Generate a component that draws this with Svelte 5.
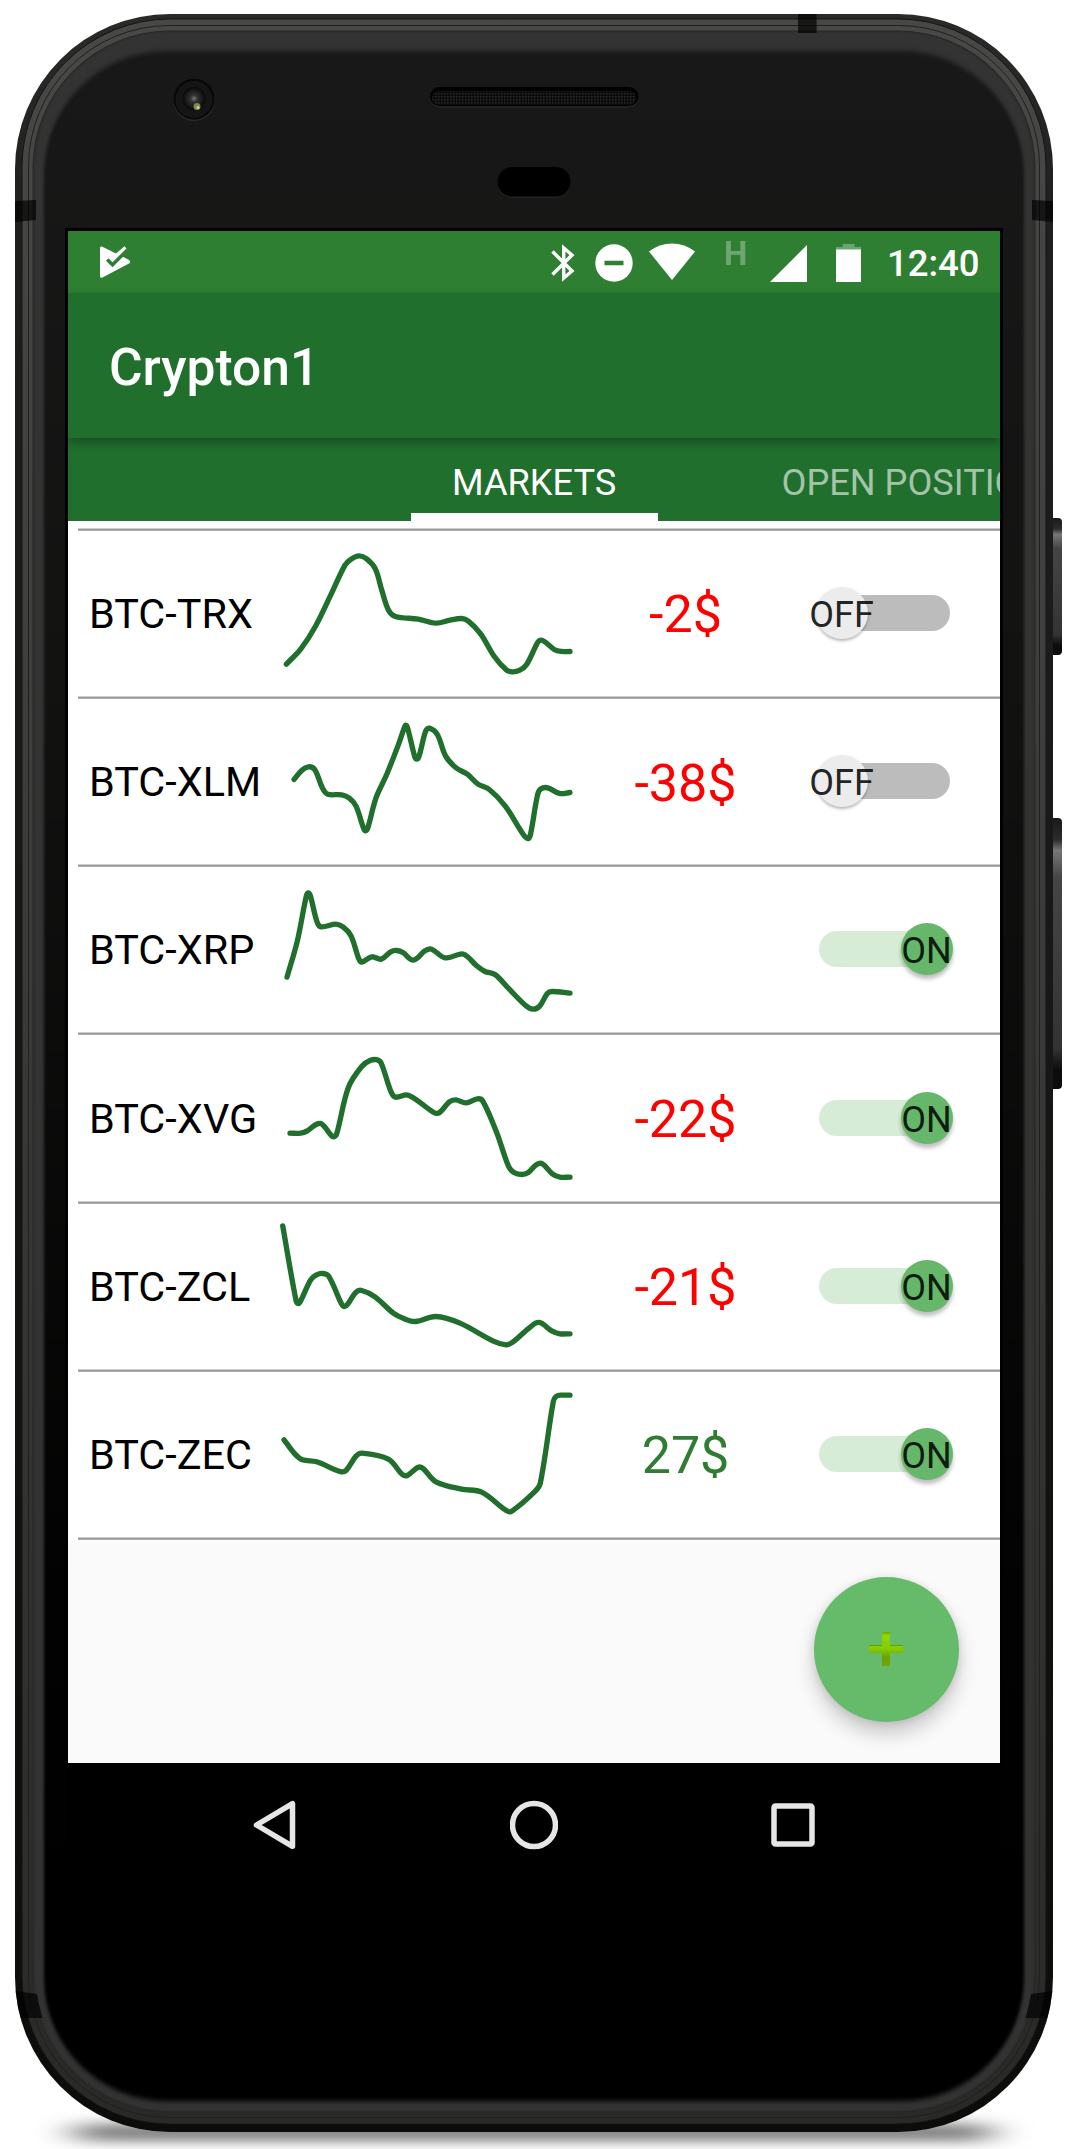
<script>
  // chart points are in thirds of a pixel, measured from the row's divider
  let markets = [
    {
      name: 'BTC-TRX', change: -2, on: false,
      points: '49,404 92,359 136,291 182,197 225,107 243,89 267,79 290,88 316,118 335,181 356,243 376,261 445,269 498,281 540,272 575,267 595,275 632,313 673,381 710,422 727,427 748,423 770,405 802,341 812,332 826,338 854,361 873,366 900,366'
    },
    {
      name: 'BTC-XLM', change: -38, on: false,
      points: '72,246 95,219 115,208 134,216 157,271 173,290 215,292 238,302 258,326 281,393 287,400 294,389 318,301 350,231 385,142 404,88 408,83 413,92 434,177 440,185 447,177 467,101 478,92 502,111 527,176 558,211 592,230 624,260 658,276 706,326 758,408 773,423 781,413 803,291 813,274 833,271 869,288 900,285'
    },
    {
      name: 'BTC-XRP', change: null, on: true,
      points: '51,335 82,226 109,91 115,82 121,91 141,169 153,184 198,176 220,185 243,211 266,279 275,290 305,274 334,281 362,259 380,255 400,262 430,284 465,256 485,251 525,277 575,265 592,273 620,301 645,318 675,327 715,368 768,421 789,431 809,422 832,384 846,378 900,383'
    },
    {
      name: 'BTC-XVG', change: -22, on: true,
      points: '60,299 92,299 112,292 138,273 155,271 182,304 191,310 200,301 235,162 275,99 300,81 322,79 334,90 363,175 376,191 415,185 492,237 509,237 538,205 557,199 588,208 622,196 638,202 680,297 716,399 732,417 755,423 775,417 800,393 817,391 847,421 870,431 900,431'
    },
    {
      name: 'BTC-ZCL', change: -21, on: true,
      points: '38,70 78,294 85,303 92,295 122,232 138,218 158,213 176,221 214,303 223,312 233,305 258,269 275,264 315,283 370,332 403,349 437,357 498,342 570,362 670,416 708,427 727,420 778,376 807,360 845,385 870,394 900,394'
    },
    {
      name: 'BTC-ZEC', change: 27, on: true,
      points: '42,208 75,251 97,268 140,274 210,303 228,300 258,257 276,248 355,266 397,312 412,315 443,291 458,293 498,334 575,356 635,365 710,421 726,422 795,363 811,338 850,93 858,78 873,74 900,74'
    }
  ];

  // smooth curve through all points, handles are a third of each segment
  function curve(points) {
    const p = points.split(' ').map((s) => s.split(',').map(Number));
    const tangents = p.map((_, i) => {
      const a = p[Math.max(i - 1, 0)];
      const b = p[Math.min(i + 1, p.length - 1)];
      const len = Math.hypot(b[0] - a[0], b[1] - a[1]);
      return [(b[0] - a[0]) / len, (b[1] - a[1]) / len];
    });
    let d = `M${p[0]}`;
    for (let i = 1; i < p.length; i++) {
      const [x0, y0] = p[i - 1];
      const [x1, y1] = p[i];
      const h = Math.hypot(x1 - x0, y1 - y0) / 3;
      const [t0, t1] = [tangents[i - 1], tangents[i]];
      d += `C${x0 + t0[0] * h},${y0 + t0[1] * h} ${x1 - t1[0] * h},${y1 - t1[1] * h} ${x1},${y1}`;
    }
    return d;
  }
</script>

<div class="device">
  <svg class="shell" viewBox="0 0 1066 2149" aria-hidden="true">
    <defs>
      <linearGradient id="edge" x1="0" y1="0" x2="0" y2="1">
        <stop offset="0" stop-color="#2a2a29" />
        <stop offset=".1" stop-color="#1f1f1f" />
        <stop offset="1" stop-color="#0c0c0b" />
      </linearGradient>
      <linearGradient id="metal" x1="0" y1="0" x2="0" y2="1">
        <stop offset="0" stop-color="#484846" />
        <stop offset="1" stop-color="#292927" />
      </linearGradient>
      <linearGradient id="glass" x1="0" y1="0" x2="0" y2="1">
        <stop offset="0" stop-color="#181818" />
        <stop offset=".3" stop-color="#121211" />
        <stop offset=".75" stop-color="#020202" />
        <stop offset=".9" stop-color="#000" />
      </linearGradient>
      <linearGradient id="key" x1="0" y1="0" x2="0" y2="1">
        <stop offset="0" stop-color="#1a1a1a" />
        <stop offset=".08" stop-color="#2c2c2c" />
        <stop offset=".12" stop-color="#777" />
        <stop offset=".22" stop-color="#454545" />
        <stop offset=".85" stop-color="#333" />
        <stop offset=".93" stop-color="#0c0c0c" />
      </linearGradient>
      <radialGradient id="lens">
        <stop offset="0" stop-color="#777" />
        <stop offset=".3" stop-color="#333" />
        <stop offset="1" stop-color="#080808" />
      </radialGradient>
      <pattern id="mesh" width="3" height="3" patternUnits="userSpaceOnUse">
        <rect width="3" height="3" fill="#0b0b0b" />
        <rect width="1.5" height="1.5" fill="#2a2a2a" />
      </pattern>
      <filter id="soft" color-interpolation-filters="sRGB"><feGaussianBlur stdDeviation="1.5 2.5" /></filter>
      <filter id="floor" x="-10%" y="-200%" width="120%" height="500%" color-interpolation-filters="sRGB">
        <feGaussianBlur stdDeviation="20 7" />
      </filter>
      <clipPath id="body"><rect x="15" y="14" width="1038" height="2118" rx="155" /></clipPath>
      <clipPath id="inside"><rect x="36" y="33" width="996" height="2077" rx="134" /></clipPath>
    </defs>

    <rect x="75" y="2125" width="916" height="15" rx="7" fill="#666" filter="url(#floor)" />
    <rect x="1046" y="518" width="16" height="137" rx="4" fill="url(#key)" />
    <rect x="1046" y="818" width="16" height="271" rx="4" fill="url(#key)" />

    <g clip-path="url(#body)">
      <rect x="15" y="14" width="1038" height="2118" fill="url(#edge)" />
      <rect x="22" y="19" width="1024" height="2105" rx="148" fill="url(#metal)" stroke="#151514" />
      <rect x="28.500" y="25.500" width="1011" height="2092" rx="141" fill="url(#metal)" stroke="#20201f" />
      <rect x="33" y="31" width="1002" height="2081" rx="137" fill="#30302f" stroke="#262625" />
      <path d="M798 14h18.600v19h-18.600zM15 201l21-1v20l-21 2zM1053 201l-21-1v20l21 2zM15 1991l22 3 6 24H15zM1053 1991l-22 3-6 24h28z" fill="#000" opacity=".68" />
      <g clip-path="url(#inside)">
        <rect x="36" y="33" width="996" height="2077" fill="#333" />
        <rect x="44" y="51" width="980" height="2050" rx="123" fill="url(#glass)" filter="url(#soft)" />
      </g>
    </g>

    <circle cx="194" cy="100.500" r="20.500" fill="#2b2b2b" />
    <circle cx="194" cy="99" r="20.500" fill="#080808" />
    <circle cx="194" cy="99.500" r="18.500" fill="#151515" />
    <circle cx="194" cy="98.500" r="11.500" fill="url(#lens)" />
    <circle cx="197" cy="106.500" r="3.500" fill="#7d8a4c" />
    <circle cx="198" cy="107.500" r="1.500" fill="#c9d49a" />
    <rect x="430" y="88" width="208.500" height="20" rx="10" fill="#222" />
    <rect x="430" y="87" width="208.500" height="19" rx="9.500" fill="#000" />
    <rect x="432" y="91" width="204" height="14" rx="7" fill="url(#mesh)" />
    <rect x="497.500" y="168" width="73" height="30" rx="15" fill="#222" />
    <rect x="497.500" y="167" width="73" height="29.500" rx="14.750" fill="#000" />
    <rect x="65" y="228" width="938" height="1540" fill="#000" />
  </svg>

  <main class="screen">
    <div class="status-bar">
      <svg class="play" width="32" height="34" viewBox="0 0 32 34">
        <path d="M3 1.500Q1 1 1 3v28q0 2.500 2.500 1.500L30 18.500q2.500-1.500 0-3.500l-6-3.300-10.500 10.600-6.500-6.500 2.500-2.500 4 4L27.500 3.500 25.500 1.300 17 8.500z" fill="#fff" />
      </svg>
      <svg class="bluetooth" width="24" height="38" viewBox="0 0 24 38" fill="none" stroke="#fff" stroke-width="3.400">
        <path d="M1.500 7.500 21 27 12.700 34V4L21 11 1.500 30.500" />
      </svg>
      <svg class="dnd" width="38" height="38" viewBox="0 0 38 38">
        <circle cx="19" cy="19" r="18.700" fill="#fff" />
        <path d="M9.500 19h19" stroke="#2f7f33" stroke-width="4.500" />
      </svg>
      <svg class="wifi" width="46" height="38" viewBox="0 0 46 38">
        <path d="M0 8.500Q10.500.5 23 .5T46 8.500L23 37z" fill="#fff" />
      </svg>
      <span class="network">H</span>
      <svg class="signal" width="37" height="37" viewBox="0 0 37 37">
        <path d="M37 0v37H0z" fill="#fff" />
      </svg>
      <svg class="battery" width="25" height="38" viewBox="0 0 25 38">
        <path d="M6.500 0h12v3H25v3H0V3h6.500z" fill="#fff" opacity=".3" />
        <path d="M0 5.500h25V38H0z" fill="#fff" />
      </svg>
      <span class="clock">12:40</span>
    </div>

    <header class="app-bar">
      <h1>Crypton1</h1>
    </header>

    <nav class="tabs">
      <span class="tab active">MARKETS</span>
      <span class="tab">OPEN POSITIONS</span>
    </nav>

    <div class="content">
      <div class="list">
        {#each markets as market (market.name)}
          <div class="divider"></div>
          <div class="row">
            <span class="name">{market.name}</span>
            <svg class="chart" viewBox="0 4.500 930 496" width="310" height="165.300">
              <path d={curve(market.points)} />
            </svg>
            <span class="change" class:loss={market.change < 0}>
              {#if market.change !== null}{market.change}${/if}
            </span>
            <button class="switch" class:on={market.on} on:click={() => (market.on = !market.on)}>
              <span class="thumb">{market.on ? 'ON' : 'OFF'}</span>
            </button>
          </div>
        {/each}
        <div class="divider"></div>
      </div>

      <button class="fab" aria-label="Add market">
        <svg width="34" height="34" viewBox="0 0 34 34">
          <defs>
            <linearGradient id="plus" x1="0" y1="0" x2="0" y2="1">
              <stop offset="0" stop-color="#6aa80c" />
              <stop offset=".1" stop-color="#8ed800" />
              <stop offset=".5" stop-color="#84cc00" />
              <stop offset=".75" stop-color="#6ba300" />
              <stop offset="1" stop-color="#70a808" />
            </linearGradient>
          </defs>
          <path d="M13 0h8v13h13v8H21v13h-8V21H0v-8h13z" fill="url(#plus)" />
          <path d="M0 13.500h13M21 13.500h13" stroke="#68a00d" />
        </svg>
      </button>
    </div>

    <footer class="nav-bar">
      <svg width="48" height="50" viewBox="0 0 48 50"><path d="M41.500 3.700v42.600L5.500 25z" /></svg>
      <svg width="48" height="50" viewBox="0 0 48 50"><circle cx="24" cy="25" r="21.500" /></svg>
      <svg width="48" height="50" viewBox="0 0 48 50"><rect x="5" y="6" width="38" height="38" rx="1.500" /></svg>
    </footer>
  </main>
</div>

<style>
  :global(body) {
    margin: 0;
    background: #fff;
  }

  .device {
    position: relative;
    width: 1066px;
    height: 2149px;
    overflow: hidden;
    box-sizing: border-box;
    padding: 231px 66px 0 68px;
    font-family: Roboto, sans-serif;
  }

  .shell {
    position: absolute;
    top: 0;
    left: 0;
    width: 1066px;
    height: 2149px;
  }

  .screen {
    position: relative;
    width: 932px;
    height: 1655px;
    overflow: hidden;
    display: flex;
    flex-direction: column;
  }

  .status-bar {
    height: 62px;
    flex: none;
    box-sizing: border-box;
    padding: 1px 22px 0 31px;
    display: flex;
    align-items: center;
    background: #2f7f33;
    color: #fff;
  }

  .play {
    margin-bottom: 1px;
  }

  .bluetooth {
    margin-left: auto;
    margin-right: 20px;
  }

  .dnd {
    margin-right: 16px;
  }

  .wifi {
    margin-right: 29px;
    margin-bottom: 2px;
  }

  .network {
    width: 24px;
    margin-right: 22px;
    margin-bottom: 17px;
    font-size: 33px;
    line-height: 34px;
    font-weight: 700;
    opacity: 0.3;
  }

  .signal {
    margin-right: 29px;
    margin-top: 2px;
  }

  .battery {
    margin-right: 26px;
  }

  .clock {
    width: 91px;
    margin-top: 2px;
    font-size: 36.5px;
    font-weight: 500;
    line-height: 40px;
    white-space: nowrap;
  }

  .app-bar {
    position: relative;
    z-index: 1;
    height: 145px;
    flex: none;
    display: flex;
    align-items: center;
    padding-left: 41px;
    background: #206f2d;
    box-shadow: 0 4px 10px rgba(0, 0, 0, 0.32);
  }

  h1 {
    margin: 4px 0 0;
    color: #fff;
    font-size: 51.5px;
    font-weight: 500;
  }

  .tabs {
    height: 82.5px;
    flex: none;
    display: flex;
    padding-left: 342.5px;
    background: #206f2d;
  }

  .tab {
    box-sizing: border-box;
    flex: none;
    height: 82.5px;
    padding: 0 40px;
    line-height: 90px;
    font-size: 36.2px;
    color: rgba(255, 255, 255, 0.6);
    white-space: nowrap;
  }

  .tab.active {
    width: 247px;
    margin-right: 84px;
    padding-left: 41.5px;
    color: #fff;
    border-bottom: 8px solid #fff;
  }

  .content {
    position: relative;
    flex: 1;
    background: #fafafa;
  }

  .list {
    box-sizing: border-box;
    padding: 7.4px 0 0 10px;
    background: #fff;
  }

  .divider {
    height: 3px;
    background: linear-gradient(#d0d0d0 0 33%, #969696 33% 66%, #b0b0b0 66%);
  }

  .row {
    height: 165.2px;
    display: flex;
    align-items: center;
  }

  .name {
    width: 181px;
    padding: 1px 0 0 11px;
    font-size: 41.4px;
    color: #000;
    white-space: nowrap;
  }

  .chart {
    flex: none;
  }

  .chart path {
    fill: none;
    stroke: #206f2d;
    stroke-width: 16;
    stroke-linecap: round;
    stroke-linejoin: round;
  }

  .change {
    width: 211px;
    padding-top: 3px;
    text-align: center;
    font-size: 52px;
    color: #2e7d32;
  }

  .change.loss {
    color: #f00;
  }

  .switch {
    width: 131px;
    height: 36px;
    margin: 0 0 1px 28px;
    padding: 0;
    border: 0;
    border-radius: 18px;
    background: #bcbcbc;
    display: flex;
    align-items: center;
    font-family: inherit;
  }

  .thumb {
    width: 52px;
    height: 52px;
    flex: none;
    margin-left: -3px;
    border-radius: 50%;
    display: flex;
    align-items: center;
    justify-content: center;
    padding: 4px 1px 0 0;
    box-sizing: border-box;
    background: #ececec;
    box-shadow: 0 2px 3px rgba(0, 0, 0, 0.28);
    font-size: 36px;
    color: rgba(0, 0, 0, 0.87);
  }

  .switch.on {
    justify-content: flex-end;
    background: #d6ecd7;
  }

  .on .thumb {
    margin-right: -3px;
    background: #66b769;
    box-shadow: 0 4px 4px rgba(0, 0, 0, 0.26);
  }

  /* floats over the list */
  .fab {
    position: absolute;
    right: 41.5px;
    bottom: 41.5px;
    width: 145px;
    height: 145px;
    border: 0;
    padding: 0;
    border-radius: 50%;
    display: flex;
    align-items: center;
    justify-content: center;
    background: #66bb6a;
    box-shadow: 0 12px 20px rgba(0, 0, 0, 0.2), 0 1px 8px rgba(0, 0, 0, 0.1);
  }

  .nav-bar {
    height: 123px;
    flex: none;
    box-sizing: border-box;
    padding: 0 183px;
    display: flex;
    align-items: center;
    justify-content: space-between;
    background: #000;
  }

  .nav-bar svg {
    fill: none;
    stroke: #e6e6e6;
    stroke-width: 5.5;
    stroke-linejoin: round;
  }
</style>
